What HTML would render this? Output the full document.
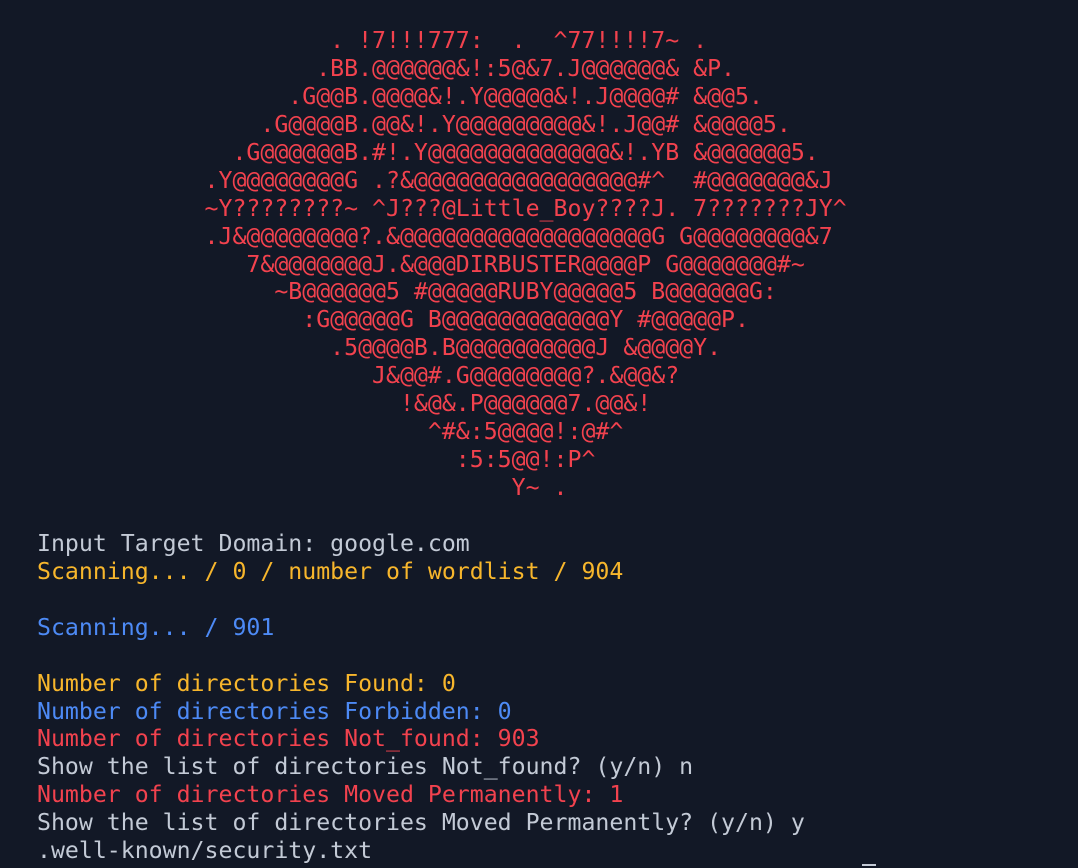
<!DOCTYPE html>
<html><head><meta charset="utf-8"><style>
html,body{margin:0;padding:0;background:#121826;width:1078px;height:868px;overflow:hidden}
pre{position:absolute;left:37px;top:27px;margin:0;font-family:"DejaVu Sans Mono","Liberation Mono",monospace;font-size:23.2px;line-height:27.93px;color:#c3cad6;white-space:pre}
.r{color:#f2424e}.y{color:#f7b62c}.b{color:#4d8af5}
.cur{position:absolute;left:862px;top:864px;width:14px;height:2px;background:#c3cad6}
</style></head><body>
<pre><span class="r">                     . !7!!!777:  .  ^77!!!!7~ .
                    .BB.@@@@@@&!:5@&7.J@@@@@@& &P.
                  .G@@B.@@@@&!.Y@@@@@&!.J@@@@# &@@5.
                .G@@@@B.@@&!.Y@@@@@@@@@&!.J@@# &@@@@5.
              .G@@@@@@B.#!.Y@@@@@@@@@@@@@&!.YB &@@@@@@5.
            .Y@@@@@@@@G .?&@@@@@@@@@@@@@@@@#^  #@@@@@@@&J
            ~Y????????~ ^J???@Little_Boy????J. 7???????JY^
            .J&@@@@@@@@?.&@@@@@@@@@@@@@@@@@@G G@@@@@@@@&7
               7&@@@@@@@J.&@@@DIRBUSTER@@@@P G@@@@@@@#~
                 ~B@@@@@@5 #@@@@@RUBY@@@@@5 B@@@@@@G:
                   :G@@@@@G B@@@@@@@@@@@@Y #@@@@@P.
                     .5@@@@B.B@@@@@@@@@@J &@@@@Y.
                        J&@@#.G@@@@@@@@?.&@@&?
                          !&@&.P@@@@@@7.@@&!
                            ^#&:5@@@@!:@#^
                              :5:5@@!:P^
                                  Y~ .</span>

Input Target Domain: google.com
<span class="y">Scanning... / 0 / number of wordlist / 904</span>

<span class="b">Scanning... / 901</span>

<span class="y">Number of directories Found: 0</span>
<span class="b">Number of directories Forbidden: 0</span>
<span class="r">Number of directories Not_found: 903</span>
Show the list of directories Not_found? (y/n) n
<span class="r">Number of directories Moved Permanently: 1</span>
Show the list of directories Moved Permanently? (y/n) y
.well-known/security.txt</pre>
<div class="cur"></div>
</body></html>
